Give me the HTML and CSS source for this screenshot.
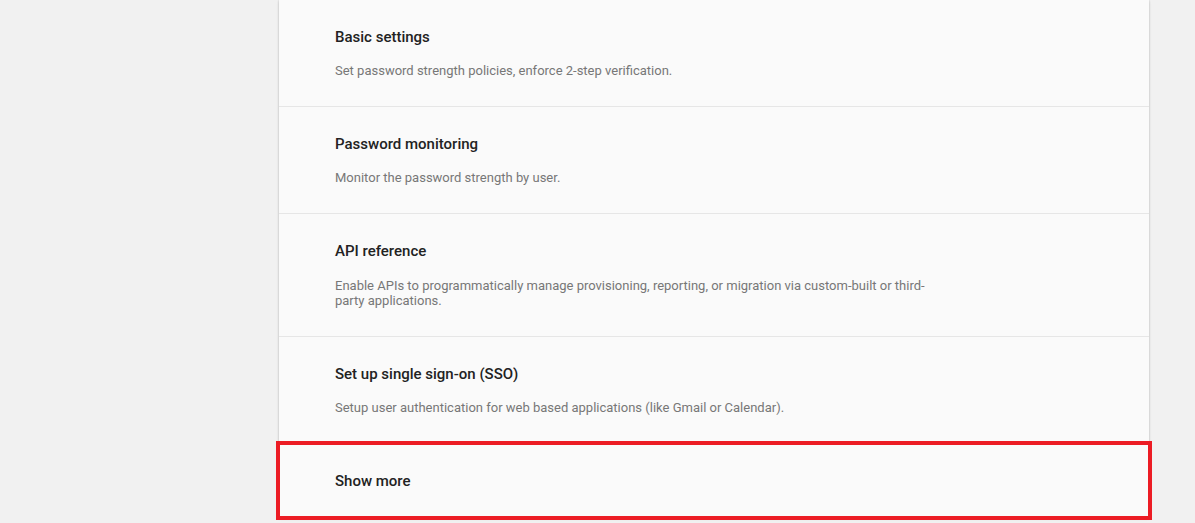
FILE: index.html
```html
<!DOCTYPE html>
<html>
<head>
<meta charset="utf-8">
<link rel="stylesheet" href="styles.css">
</head>
<body>
<div class="page">
  <div class="card">
    <div class="row">
      <div class="title">Basic settings</div>
      <div class="desc">Set password strength policies, enforce 2-step verification.</div>
    </div>
    <div class="row">
      <div class="title">Password monitoring</div>
      <div class="desc">Monitor the password strength by user.</div>
    </div>
    <div class="row">
      <div class="title">API reference</div>
      <div class="desc multi">Enable APIs to programmatically manage provisioning, reporting, or migration via custom-built or third-<br>party applications.</div>
    </div>
    <div class="row">
      <div class="title">Set up single sign-on (SSO)</div>
      <div class="desc">Setup user authentication for web based applications (like Gmail or Calendar).</div>
    </div>
    <div class="row more">
      <div class="title">Show more</div>
    </div>
  </div>
</div>
</body>
</html>
```
FILE: styles.css
```css
html, body {
  margin: 0;
  padding: 0;
  background: #f1f1f1;
  font-family: Roboto, "Liberation Sans", Arial, sans-serif;
  height: 100%;
  overflow: hidden;
}
.page {
  padding-left: 279px;
}
.card {
  width: 870px;
  background: #fafafa;
  box-shadow: 0 0 2px rgba(0,0,0,0.22), 0 2px 3px rgba(0,0,0,0.08);
}
.row {
  padding: 27px 56px 28px;
  border-bottom: 1px solid #e6e6e6;
}
.title {
  font-size: 15px;
  line-height: 20px;
  font-weight: 500;
  color: #222222;
}
.desc {
  margin-top: 16px;
  font-size: 13px;
  line-height: 15px;
  color: #777777;
}
.desc.multi {
  margin-top: 17px;
}
.row.more {
  padding: 27px 56px 26px;
  border-bottom: none;
  outline: 4px solid #ec1c24;
  outline-offset: -1px;
}
```
